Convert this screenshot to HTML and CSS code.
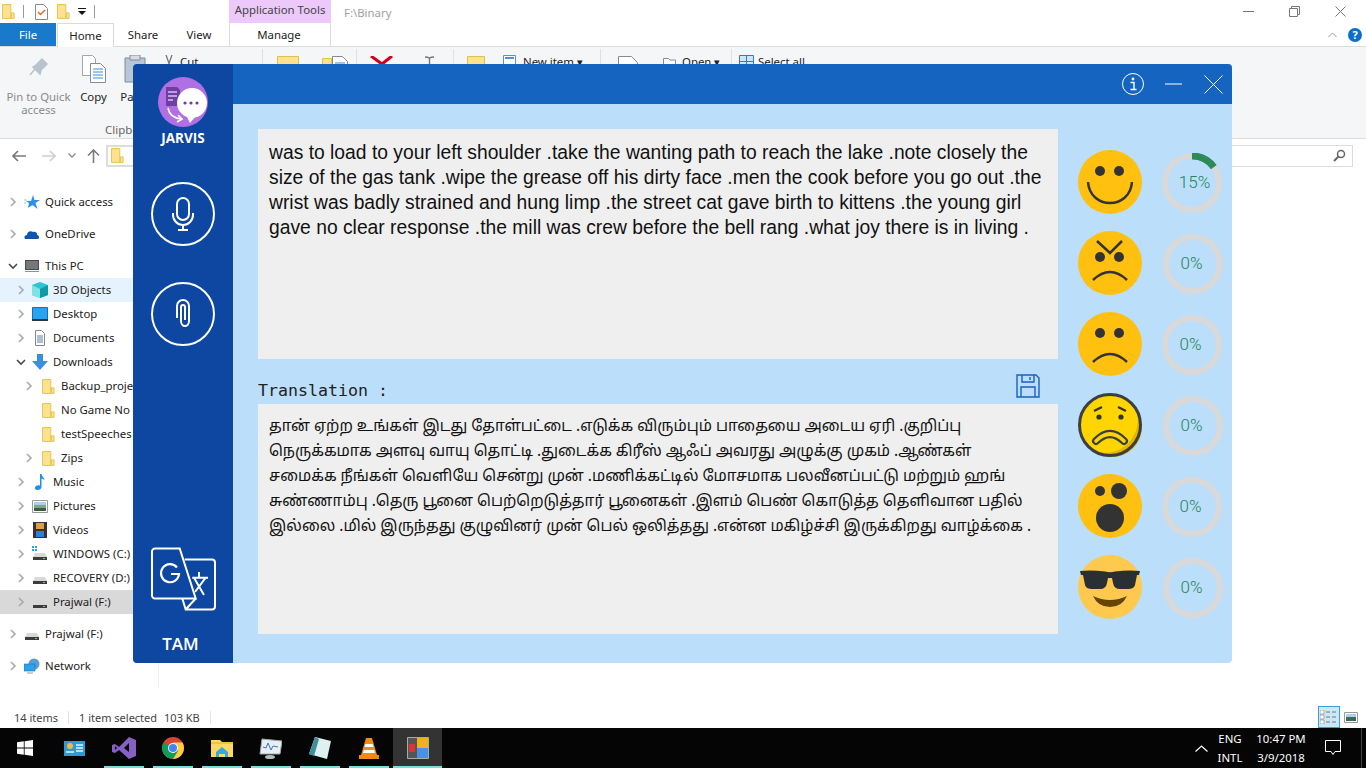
FILE: index.html
```html
<!DOCTYPE html>
<html lang="en">
<head>
    <meta charset="UTF-8">
    <meta name="viewport" content="width=device-width, initial-scale=1.0">
    <title>JARVIS</title>
    <link rel="stylesheet" href="styles.css">
</head>
<body>
    <svg class="defs" width="0" height="0">
        <symbol id="folder" viewBox="0 0 14 16">
            <path d="M.5.5h9v15h-9z" fill="#ffe28e" stroke="#e3c04d"/>
            <path d="M10 9.5h3v6h-3z" fill="#ffe28e" stroke="#e3c04d"/>
        </symbol>
        <symbol id="right" viewBox="0 0 8 10"><path d="M2 1l4 4-4 4" fill="none" stroke="#a9a9a9" stroke-width="1.6"/></symbol>
        <symbol id="down" viewBox="0 0 10 8"><path d="M1 2l4 4 4-4" fill="none" stroke="#4a4a4a" stroke-width="1.6"/></symbol>
        <symbol id="drive" viewBox="0 0 16 16">
            <path d="M3 7h10l2 4H1z" fill="#d8d8d8"/><path d="M1 11h14v3H1z" fill="#3c3c3c"/><path d="M11 12h2v1h-2z" fill="#5fd35f"/>
        </symbol>
    </svg>

    <div class="explorer">
        <header class="qat">
            <div class="qat-icons">
                <svg class="ic-folder-s" width="13" height="15"><use href="#folder"/></svg>
                <span class="qat-sep"></span>
                <svg width="13" height="16" viewBox="0 0 13 16"><path d="M.5.5h8l4 4v11H.5z" fill="#fff" stroke="#8a8a8a"/><path d="M3 8l2.500 2.500L10 6" fill="none" stroke="#e8622a" stroke-width="1.500"/></svg>
                <svg class="ic-folder-s" width="13" height="15"><use href="#folder"/></svg>
                <svg width="8" height="7" viewBox="0 0 8 7"><path d="M0 0h8v1H0zM0 3h8L4 7z" fill="#111"/></svg>
                <span class="qat-sep"></span>
            </div>
            <div class="app-tools">Application Tools</div>
            <div class="path-title">F:\Binary</div>
            <div class="win-ctrl">
                <svg width="11" height="11" viewBox="0 0 11 11"><path d="M0 5.500h11" stroke="#777"/></svg>
                <svg width="11" height="11" viewBox="0 0 11 11"><path d="M2.500 2.500V.5h8v8h-2M.5 2.500h8v8h-8z" fill="none" stroke="#777"/></svg>
                <svg width="11" height="11" viewBox="0 0 11 11"><path d="M.5.5l10 10M10.500.5l-10 10" stroke="#777"/></svg>
            </div>
        </header>

        <nav class="tabs">
            <span class="tab tab-file">File</span>
            <span class="tab tab-home">Home</span>
            <span class="tab tab-share">Share</span>
            <span class="tab tab-view">View</span>
            <span class="tab tab-manage">Manage</span>
            <span class="tabs-right">
                <svg width="9" height="6" viewBox="0 0 9 6"><path d="M.5 5l4-4 4 4" fill="none" stroke="#999"/></svg>
                <svg width="14" height="14" viewBox="0 0 14 14"><circle cx="7" cy="7" r="7" fill="#0f6fc6"/><text x="7" y="11" class="help-q">?</text></svg>
            </span>
        </nav>

        <section class="ribbon">
            <div class="tool tool-col">
                <svg width="24" height="24" viewBox="0 0 24 24"><path d="M9 10l6-6 5 5-6 6-1 4-7-7zM8 14l-5 6" fill="#b9c2cf" stroke="#b9c2cf" stroke-width="1.500"/></svg>
                <span class="muted">Pin to Quick access</span>
            </div>
            <div class="tool tool-col">
                <svg class="ic-copy" width="24" height="28" viewBox="0 0 24 28"><path d="M.5.5h10l3 3v17H.5z" fill="#fff" stroke="#9aa"/><path d="M8.500 8.500h10l5 5v14h-15z" fill="#fff" stroke="#889"/><path d="M11 14h10M11 17h10M11 20h10M11 23h10" stroke="#3b8be0"/></svg>
                <span>Copy</span>
            </div>
            <div class="tool tool-col">
                <svg class="ic-copy" width="22" height="28" viewBox="0 0 22 28"><path d="M1 3h20v24H1z" fill="#b9c6d6" stroke="#7f8c99"/><path d="M6 0h10v5H6z" fill="#d8dde3" stroke="#7f8c99"/></svg>
                <span>Paste</span>
            </div>
            <div class="tool tool-cut">
                <svg width="8" height="11" viewBox="0 0 8 11"><path d="M1 0l4 11M7 0L3 11" stroke="#777" stroke-width="1.300"/></svg>
                <span>Cut</span>
            </div>
            <span class="rb-sep"></span>
            <svg class="rb-ic" width="22" height="16" viewBox="0 0 22 16"><path d="M.5.5h21v15H.5z" fill="#ffe28e" stroke="#e3c04d"/></svg>
            <svg class="rb-ic" width="26" height="16" viewBox="0 0 26 16"><path d="M.5 2.500h9v13h-9z" fill="#ffe28e" stroke="#e3c04d"/><path d="M10.500.5h10l5 5v10h-15z" fill="#fff" stroke="#889"/><path d="M13 7h10M13 10h10" stroke="#3b8be0"/></svg>
            <span class="rb-sep"></span>
            <svg class="rb-ic rb-x" width="25" height="10" viewBox="0 0 25 10"><path d="M2 0l11 8L23 0" fill="none" stroke="#d5001c" stroke-width="3"/></svg>
            <svg class="rb-ic rb-i" width="9" height="10" viewBox="0 0 9 10"><path d="M0 1c2 0 3 0 4.500 1C6 1 7 1 9 1M4.500 2v8" fill="none" stroke="#777" stroke-width="1.400"/></svg>
            <span class="rb-sep"></span>
            <svg class="rb-ic" width="18" height="14" viewBox="0 0 18 14"><path d="M.5.5h17v13H.5z" fill="#ffe28e" stroke="#e3c04d"/></svg>
            <div class="tool tool-cut tool-pad">
                <svg width="13" height="11" viewBox="0 0 13 11"><path d="M.5.5h12v10H.5z" fill="#fff" stroke="#5a8fc9"/><path d="M2 3h9" stroke="#5a8fc9" stroke-width="2"/></svg>
                <span>New item ▾</span>
            </div>
            <span class="rb-sep"></span>
            <svg class="rb-ic" width="20" height="10" viewBox="0 0 20 10"><path d="M.5 10V.5h13l6 6V10" fill="#fff" stroke="#889"/></svg>
            <div class="tool tool-cut tool-pad-open">
                <svg width="13" height="11" viewBox="0 0 13 11"><path d="M.5 11V3.500h5l1.500 1.500h5.500v6" fill="#fff" stroke="#889"/></svg>
                <span>Open ▾</span>
            </div>
            <span class="rb-sep"></span>
            <div class="tool tool-cut tool-pad-sel">
                <svg width="15" height="13" viewBox="0 0 15 13"><path d="M.5.5h14v12H.5zM.5 6.500h14M7.500.5v12" fill="#cfe6fb" stroke="#2b7cd3"/></svg>
                <span>Select all</span>
            </div>
            <div class="rb-label">Clipboard</div>
        </section>

        <section class="addressbar">
            <svg width="14" height="14" viewBox="0 0 14 14"><path d="M6 2L1 7l5 5M1 7h13" fill="none" stroke="#7a7a7a" stroke-width="1.600"/></svg>
            <svg class="nav-fwd" width="14" height="14" viewBox="0 0 14 14"><path d="M8 2l5 5-5 5M13 7H0" fill="none" stroke="#d0d0d0" stroke-width="1.600"/></svg>
            <svg class="nav-drop" width="8" height="5" viewBox="0 0 8 5"><path d="M.5.5L4 4 7.500.5" fill="none" stroke="#8a8a8a" stroke-width="1.300"/></svg>
            <svg class="nav-up" width="13" height="14" viewBox="0 0 13 14"><path d="M1 6.500l5.500-5.500L12 6.500M6.500 1v13" fill="none" stroke="#7a7a7a" stroke-width="1.600"/></svg>
            <div class="addr-box"><svg width="13" height="15"><use href="#folder"/></svg></div>
            <div class="search-box">
                <svg width="13" height="13" viewBox="0 0 13 13"><circle cx="8" cy="5" r="3.500" fill="none" stroke="#666" stroke-width="1.500"/><path d="M5.500 7.500L1 12" stroke="#666" stroke-width="2"/></svg>
            </div>
        </section>

        <section class="main">
            <aside class="tree">
                <div class="group">
                    <div class="row lv0"><svg class="chev" width="8" height="10"><use href="#right"/></svg>
                        <svg class="ico" width="16" height="16" viewBox="0 0 16 16"><path d="M9 1l1.500 5H16l-4.500 3 2 6L8.500 11 4 14l1-5-3-2h5z" fill="#2e8fe6"/><path d="M0 6h3M0 9h2" stroke="#8ec6f5"/></svg>
                        <span>Quick access</span></div>
                </div>
                <div class="group">
                    <div class="row lv0"><svg class="chev" width="8" height="10"><use href="#right"/></svg>
                        <svg class="ico" width="16" height="16" viewBox="0 0 16 16"><path d="M1 13c-1.500-2 0-4 2-4 0-3 3-5 6-3 2-1 5 1 4 3 2 0 3 3 1 4z" fill="#0f55b0"/></svg>
                        <span>OneDrive</span></div>
                </div>
                <div class="group">
                    <div class="row lv0"><svg class="chev" width="10" height="8"><use href="#down"/></svg>
                        <svg class="ico" width="16" height="16" viewBox="0 0 16 16"><path d="M1 2h14v10H1z" fill="#4a4a4a"/><path d="M2 3h12v8H2z" fill="#777"/><path d="M1 13h14v1H1z" fill="#4aa8e8"/></svg>
                        <span>This PC</span></div>
                    <div class="row lv1 row-hover"><svg class="chev" width="8" height="10"><use href="#right"/></svg>
                        <svg class="ico" width="16" height="16" viewBox="0 0 16 16"><path d="M8 0l8 3v10l-8 3-8-3V3z" fill="#2fc4cf"/><path d="M8 7l8-4v10l-8 3z" fill="#0e9aa8"/><path d="M0 3l8 4v9l-8-3z" fill="#7fe3e3"/></svg>
                        <span>3D Objects</span></div>
                    <div class="row lv1"><svg class="chev" width="8" height="10"><use href="#right"/></svg>
                        <svg class="ico" width="16" height="14" viewBox="0 0 16 14"><path d="M.5.5h15v12H.5z" fill="#25a5f0" stroke="#0f6fc6"/><path d="M0 12h16v2H0z" fill="#333"/></svg>
                        <span>Desktop</span></div>
                    <div class="row lv1"><svg class="chev" width="8" height="10"><use href="#right"/></svg>
                        <svg class="ico" width="16" height="16" viewBox="0 0 16 16"><path d="M3.500.5h6l3 3v12h-9z" fill="#fff" stroke="#888"/><path d="M5 6h6M5 8h6M5 10h6M5 12h6" stroke="#5a7fa8"/></svg>
                        <span>Documents</span></div>
                    <div class="row lv1"><svg class="chev" width="10" height="8"><use href="#down"/></svg>
                        <svg class="ico ico-dl" width="16" height="16" viewBox="0 0 16 16"><path d="M5 0h6v7h5l-8 9-8-9h5z" fill="#3a8fe0"/></svg>
                        <span>Downloads</span></div>
                    <div class="row lv2"><svg class="chev" width="8" height="10"><use href="#right"/></svg>
                        <svg class="ico-s" width="13" height="15"><use href="#folder"/></svg>
                        <span>Backup_project</span></div>
                    <div class="row lv2 no-chev"><svg class="ico-s" width="13" height="15"><use href="#folder"/></svg>
                        <span>No Game No Life</span></div>
                    <div class="row lv2 no-chev"><svg class="ico-s" width="13" height="15"><use href="#folder"/></svg>
                        <span>testSpeeches</span></div>
                    <div class="row lv2"><svg class="chev" width="8" height="10"><use href="#right"/></svg>
                        <svg class="ico-s" width="13" height="15"><use href="#folder"/></svg>
                        <span>Zips</span></div>
                    <div class="row lv1"><svg class="chev" width="8" height="10"><use href="#right"/></svg>
                        <svg class="ico" width="16" height="16" viewBox="0 0 16 16"><path d="M8 0h1.500c.5 3 3 3.500 3 6-1-1-2-1.500-3-1.500V13c0 2-2 3-4 3s-3-1-2.500-2.500S6 11 8 11.500z" fill="#1e90e8"/></svg>
                        <span>Music</span></div>
                    <div class="row lv1"><svg class="chev" width="8" height="10"><use href="#right"/></svg>
                        <svg class="ico" width="16" height="13" viewBox="0 0 16 13"><path d="M.5.5h15v12H.5z" fill="#fff" stroke="#999"/><path d="M2 2h12v3H2z" fill="#a9d2ea"/><path d="M2 5h12v3H2z" fill="#7fa58a"/><path d="M2 8h12v3H2z" fill="#3d5a46"/></svg>
                        <span>Pictures</span></div>
                    <div class="row lv1"><svg class="chev" width="8" height="10"><use href="#right"/></svg>
                        <svg class="ico" width="14" height="16" viewBox="0 0 14 16"><path d="M0 0h14v16H0z" fill="#333"/><path d="M3 1h8v6H3z" fill="#d9a52e"/><path d="M3 9h8v6H3z" fill="#2f7fd6"/></svg>
                        <span>Videos</span></div>
                    <div class="row lv1"><svg class="chev" width="8" height="10"><use href="#right"/></svg>
                        <svg class="ico" width="16" height="16" viewBox="0 0 16 16"><path d="M0 0h2v2H0zM3 0h2v2H3zM0 3h2v2H0zM3 3h2v2H3z" fill="#1fa4ee"/><use href="#drive"/></svg>
                        <span>WINDOWS (C:)</span></div>
                    <div class="row lv1"><svg class="chev" width="8" height="10"><use href="#right"/></svg>
                        <svg class="ico" width="16" height="16"><use href="#drive"/></svg>
                        <span>RECOVERY (D:)</span></div>
                    <div class="row lv1 row-selected"><svg class="chev" width="8" height="10"><use href="#right"/></svg>
                        <svg class="ico" width="16" height="16"><use href="#drive"/></svg>
                        <span>Prajwal (F:)</span></div>
                </div>
                <div class="group">
                    <div class="row lv0"><svg class="chev" width="8" height="10"><use href="#right"/></svg>
                        <svg class="ico" width="16" height="16"><use href="#drive"/></svg>
                        <span>Prajwal (F:)</span></div>
                </div>
                <div class="group">
                    <div class="row lv0"><svg class="chev" width="8" height="10"><use href="#right"/></svg>
                        <svg class="ico" width="16" height="16" viewBox="0 0 16 16"><circle cx="10" cy="6" r="5.500" fill="#5c9bd5"/><path d="M0 6h11v7H0z" fill="#29a3ec" stroke="#1c70b8" stroke-width=".6"/><path d="M3 15h6" stroke="#999"/></svg>
                        <span>Network</span></div>
                </div>
            </aside>
        </section>

        <footer class="status">
            <span>14 items</span>
            <span class="status-sep"></span>
            <span>1 item selected</span>
            <span class="status-size">103 KB</span>
            <span class="status-sep"></span>
            <span class="status-views">
                <span class="view-on">
                    <svg width="18" height="14" viewBox="0 0 18 14"><path d="M0 0h4v4H0zM0 5h4v4H0zM0 10h4v4H0z" fill="#fff" stroke="#999" stroke-width=".8"/><path d="M6 2h4M12 2h4M6 7h4M12 7h4M6 12h4M12 12h4" stroke="#777"/></svg>
                </span>
                <svg width="14" height="11" viewBox="0 0 14 11"><path d="M.5.5h13v10H.5z" fill="#fff" stroke="#999"/><path d="M2 2h10v3H2z" fill="#a9d2ea"/><path d="M2 5h10v4H2z" fill="#3d6a56"/></svg>
            </span>
        </footer>
    </div>

    <footer class="taskbar">
        <div class="task task-start">
            <svg width="16" height="16" viewBox="0 0 16 16"><path d="M0 2.300L6.800 1.300V7.600H0zM7.600 1.200L16 0V7.600H7.600zM0 8.400H6.800V14.700L0 13.700zM7.600 8.400H16V16L7.600 14.800z" fill="#fff"/></svg>
        </div>
        <div class="task">
            <svg width="21" height="15" viewBox="0 0 21 15"><path d="M0 0h21v15H0z" fill="#2f9ad8"/><circle cx="6" cy="5" r="3" fill="#ffb73a"/><path d="M2 11h8M12 4h7M12 7h7M12 10h7" stroke="#e8f4fb" stroke-width="1.500"/></svg>
        </div>
        <div class="task task-on">
            <svg width="24" height="24" viewBox="0 0 24 24"><path d="M17 1l7 3v16l-7 3-10-9-4 3-3-1V9l3-1 4 3zM17 7l-5 5 5 4zM3 10v4l2-2z" fill="#8661c5"/></svg>
        </div>
        <div class="task task-on">
            <svg width="22" height="22" viewBox="0 0 22 22"><circle cx="11" cy="11" r="11" fill="#db4437"/><path d="M11 11L1.500 5.500A11 11 0 0 0 11 22l5-8z" fill="#0f9d58"/><path d="M11 5.500h9.500A11 11 0 0 1 11 22l5-8z" fill="#ffcd40"/><circle cx="11" cy="11" r="5" fill="#fff"/><circle cx="11" cy="11" r="4" fill="#4285f4"/></svg>
        </div>
        <div class="task task-on">
            <svg width="22" height="18" viewBox="0 0 22 18"><path d="M0 1h9l2 2h11v15H0z" fill="#ffd766"/><path d="M0 3h22v2H0z" fill="#f3c140"/><path d="M5 13l6-5 6 5v5h-3v-3H8v3H5z" fill="#35a8e0"/></svg>
        </div>
        <div class="task task-on">
            <svg width="23" height="22" viewBox="0 0 23 22"><path d="M3 2l20 2-2 13H1z" fill="#e8eef2" stroke="#9aa"/><path d="M4 10l3 1 2-5 3 7 2-4 5 1" fill="none" stroke="#3a78b8"/><ellipse cx="11" cy="20" rx="5" ry="2" fill="#bbb"/></svg>
        </div>
        <div class="task task-on">
            <svg width="22" height="22" viewBox="0 0 22 22"><path d="M6 0l16 4-4 18L0 17z" fill="#dff0f0"/><path d="M6 0L0 17l5 2L10 2z" fill="#3f8f9f"/></svg>
        </div>
        <div class="task task-on">
            <svg width="20" height="23" viewBox="0 0 20 23"><path d="M7 1h6l5 17H2z" fill="#f28a12"/><path d="M6.400 7h7.200l1 3H5.400zM4.800 13h10.400l.8 3H4z" fill="#fff"/><path d="M0 18h20v4H0z" fill="#f28a12"/></svg>
        </div>
        <div class="task task-on task-active">
            <svg width="22" height="22" viewBox="0 0 22 22"><path d="M.5.5h21v21H.5z" fill="#555" stroke="#aaa"/><path d="M10 1h11v10H10z" fill="#f2b01e"/><path d="M10 11h11v10H10z" fill="#4d8fe0"/><path d="M2 7h6v8H2z" fill="#d33"/></svg>
        </div>
        <div class="tray">
            <svg width="13" height="7" viewBox="0 0 13 7"><path d="M.5 6.500l6-5.500 6 5.500" fill="none" stroke="#fff" stroke-width="1.200"/></svg>
            <div class="tray-lang"><span>ENG</span><span>INTL</span></div>
            <div class="tray-clock"><span>10:47 PM</span><span>3/9/2018</span></div>
            <svg class="tray-note" width="16" height="16" viewBox="0 0 16 16"><path d="M.5.5h15v11H10l-2 3-2-3H.5z" fill="none" stroke="#fff"/></svg>
            <span class="show-desktop"></span>
        </div>
    </footer>

    <main class="jarvis">
        <aside class="side">
            <svg class="logo" width="50" height="50" viewBox="0 0 50 50">
                <circle cx="25" cy="25" r="25" fill="#b06fe3"/>
                <path d="M8 10h11l3 3v16H8z" fill="#6d3fa3"/>
                <path d="M10 15h9M10 19h9M10 23h5" stroke="#d9c2f0" stroke-width="1.500"/>
                <path d="M10 31c1 6 6 10 13 11" fill="none" stroke="#fff" stroke-width="1.600"/>
                <path d="M20 38l4 4-5 3" fill="none" stroke="#fff" stroke-width="1.600"/>
                <circle cx="34" cy="26" r="15" fill="#fff"/>
                <path d="M28 38l4 8 6-7z" fill="#fff"/>
                <circle cx="27" cy="26" r="1.600" fill="#6d3fa3"/>
                <circle cx="33" cy="26" r="1.600" fill="#6d3fa3"/>
                <circle cx="39" cy="26" r="1.600" fill="#6d3fa3"/>
            </svg>
            <div class="brand">JARVIS</div>
            <button class="round-btn round-mic">
                <svg width="64" height="64" viewBox="0 0 64 64" fill="none" stroke="#fff" stroke-width="2">
                    <circle cx="32" cy="32" r="31"/>
                    <rect x="26" y="16" width="12" height="22" rx="6"/>
                    <path d="M22 31v2a10 10 0 0 0 20 0v-2M32 43v5M27 48h10"/>
                </svg>
            </button>
            <button class="round-btn round-clip">
                <svg width="64" height="64" viewBox="0 0 64 64" fill="none" stroke="#fff" stroke-width="2">
                    <circle cx="32" cy="32" r="31"/>
                    <path d="M26 36V24a6 6 0 0 1 12 0V39a4 5 0 0 1-8 0V25a2 2 0 0 1 4 0V38"/>
                </svg>
            </button>
            <svg class="translate" width="65" height="64" viewBox="0 0 65 64" fill="none" stroke="#fff" stroke-width="2">
                <path d="M4 1.500H28.700L44.700 51.500H4a3 3 0 0 1-3-3V4.500a3 3 0 0 1 3-3z"/>
                <path d="M33.700 12.500H61a3 3 0 0 1 3 3V59.500a3 3 0 0 1-3 3H34.700L31.300 51.500M44.700 51.500L34.700 62.500"/>
                <path d="M26 20.500a9 9 0 1 0 2 6.500H20" stroke-width="2.200"/>
                <path d="M41.300 30.700H57M48 25v5.700M43 30.700L53 48M54.700 30.700L44 45"/>
            </svg>
            <div class="lang">TAM</div>
        </aside>

        <section class="panel">
            <header class="panel-top">
                <svg width="22" height="22" viewBox="0 0 22 22"><circle cx="11" cy="11" r="10.500" fill="none" stroke="#fff"/><circle cx="11" cy="6" r="1.400" fill="#fff"/><path d="M8.500 9.500h3.500v7M8.500 16.500h6" fill="none" stroke="#fff" stroke-width="1.400"/></svg>
                <svg class="top-min" width="17" height="2" viewBox="0 0 17 2"><path d="M0 1h17" stroke="#fff" stroke-width="1.200"/></svg>
                <svg class="top-close" width="19" height="19" viewBox="0 0 19 19"><path d="M.5.5l18 18M18.500.5l-18 18" stroke="#fff"/></svg>
            </header>
            <div class="panel-body">
                <div class="texts">
                    <div class="box box-en">
                        was to load to your left shoulder .take the wanting path to reach the lake .note closely the<br>
                        size of the gas tank .wipe the grease off his dirty face .men the cook before you go out .the<br>
                        wrist was badly strained and hung limp .the street cat gave birth to kittens .the young girl<br>
                        gave no clear response .the mill was crew before the bell rang .what joy there is in living .
                    </div>
                    <div class="trans-head">
                        <span class="trans-label">Translation :</span>
                        <svg class="save" width="24" height="24" viewBox="0 0 24 24" fill="none" stroke="#1a5fc4" stroke-width="1.400"><path d="M1 1h19l3 3v19H1zM6 1v7h12V1M5 23v-10h14v10M14 3v3"/></svg>
                    </div>
                    <div class="box box-ta" lang="ta">
                        தான் ஏற்ற உங்கள் இடது தோள்பட்டை .எடுக்க விரும்பும் பாதையை அடைய ஏரி .குறிப்பு<br>
                        நெருக்கமாக அளவு வாயு தொட்டி .துடைக்க கிரீஸ் ஆஃப் அவரது அழுக்கு முகம் .ஆண்கள்<br>
                        சமைக்க நீங்கள் வெளியே சென்று முன் .மணிக்கட்டில் மோசமாக பலவீனப்பட்டு மற்றும் ஹங்<br>
                        சுண்ணாம்பு .தெரு பூனை பெற்றெடுத்தார் பூனைகள் .இளம் பெண் கொடுத்த தெளிவான பதில்<br>
                        இல்லை .மில் இருந்தது குழுவினர் முன் பெல் ஒலித்தது .என்ன மகிழ்ச்சி இருக்கிறது வாழ்க்கை .
                    </div>
                </div>
                <div class="moods">
                    <div class="mood">
                        <svg width="64" height="64" viewBox="0 0 64 64" fill="none" stroke="#333" stroke-width="2.500">
                            <circle cx="32" cy="32" r="32" fill="#ffc010" stroke="none"/>
                            <circle cx="22" cy="21" r="5" fill="#333" stroke="none"/>
                            <circle cx="41" cy="21" r="5" fill="#333" stroke="none"/>
                            <path d="M10 32C12 60 52 60 54 32"/>
                        </svg>
                        <div class="ring ring-on">
                            <svg width="60" height="60" viewBox="0 0 60 60" fill="none">
                                <circle cx="30" cy="30" r="27" stroke="#d9d9d9" stroke-width="6"/>
                                <circle cx="30" cy="30" r="27" stroke="#2e8b57" stroke-width="7" pathLength="100" stroke-dasharray="15 85" transform="rotate(-90 30 30)"/>
                            </svg>
                            <span>15%</span>
                        </div>
                    </div>
                    <div class="mood">
                        <svg width="64" height="64" viewBox="0 0 64 64" fill="none" stroke="#333" stroke-width="2.500">
                            <circle cx="32" cy="32" r="32" fill="#ffc010" stroke="none"/>
                            <circle cx="22" cy="26" r="5" fill="#333" stroke="none"/>
                            <circle cx="41" cy="26" r="5" fill="#333" stroke="none"/>
                            <path d="M19 10L32 22 44 10M15 49Q32 33 49 49"/>
                        </svg>
                        <div class="ring"><svg width="60" height="60" viewBox="0 0 60 60" fill="none"><circle cx="30" cy="30" r="27" stroke="#d9d9d9" stroke-width="6"/></svg><span>0%</span></div>
                    </div>
                    <div class="mood">
                        <svg width="64" height="64" viewBox="0 0 64 64" fill="none" stroke="#333" stroke-width="2.500">
                            <circle cx="32" cy="32" r="32" fill="#ffc010" stroke="none"/>
                            <circle cx="22" cy="21" r="5" fill="#333" stroke="none"/>
                            <circle cx="41" cy="21" r="5" fill="#333" stroke="none"/>
                            <path d="M15 50Q32 34 49 50"/>
                        </svg>
                        <div class="ring"><svg width="60" height="60" viewBox="0 0 60 60" fill="none"><circle cx="30" cy="30" r="27" stroke="#d9d9d9" stroke-width="6"/></svg><span>0%</span></div>
                    </div>
                    <div class="mood">
                        <svg width="64" height="64" viewBox="0 0 64 64" fill="none">
                            <circle cx="32" cy="32" r="31" fill="#ffd500"/>
                            <path d="M58 16A30 30 0 0 1 16 58 33 33 0 0 0 58 16z" fill="#e3b400"/>
                            <circle cx="32" cy="32" r="30.500" stroke="#3a3f44" stroke-width="3"/>
                            <circle cx="21" cy="24" r="2.600" fill="#333"/>
                            <circle cx="43" cy="24" r="2.600" fill="#333"/>
                            <path d="M16 18l8-4M40 14l8 4" stroke="#333" stroke-width="2.200"/>
                            <path d="M18 48Q32 34 46 48" stroke="#3a3f44" stroke-width="8" stroke-linecap="round"/>
                            <path d="M18 48Q32 34 46 48" stroke="#ffd500" stroke-width="3.600" stroke-linecap="round"/>
                        </svg>
                        <div class="ring"><svg width="60" height="60" viewBox="0 0 60 60" fill="none"><circle cx="30" cy="30" r="27" stroke="#d9d9d9" stroke-width="6"/></svg><span>0%</span></div>
                    </div>
                    <div class="mood">
                        <svg width="64" height="64" viewBox="0 0 64 64">
                            <circle cx="32" cy="32" r="32" fill="#ffc010"/>
                            <circle cx="22" cy="17" r="5" fill="#333"/>
                            <circle cx="41" cy="17" r="8" fill="#333"/>
                            <circle cx="32" cy="44" r="14" fill="#333"/>
                        </svg>
                        <div class="ring"><svg width="60" height="60" viewBox="0 0 60 60" fill="none"><circle cx="30" cy="30" r="27" stroke="#d9d9d9" stroke-width="6"/></svg><span>0%</span></div>
                    </div>
                    <div class="mood">
                        <svg width="64" height="64" viewBox="0 0 64 64">
                            <circle cx="32" cy="32" r="32" fill="#ffc94d"/>
                            <path d="M2 16Q14 15 27 16.500Q32 18 37 16.500Q50 15 62 16L61 20 59 20 57 30Q56 34 50 34H42Q36 34 35 28L34 23H30L29 28Q28 34 22 34H14Q8 34 7 30L5 20 3 20z" fill="#292f33"/>
                            <path d="M15 41Q32 49 49 41Q44 52 32 52Q20 52 15 41z" fill="#664500"/>
                        </svg>
                        <div class="ring"><svg width="60" height="60" viewBox="0 0 60 60" fill="none"><circle cx="30" cy="30" r="27" stroke="#d9d9d9" stroke-width="6"/></svg><span>0%</span></div>
                    </div>
                </div>
            </div>
        </section>
    </main>
</body>
</html>
```

FILE: styles.css
```css
* {
    box-sizing: border-box;
}
body {
    margin: 0;
    width: 1366px;
    height: 768px;
    overflow: hidden;
    background-color: white;
    font-family: "Noto Sans", "Open Sans", sans-serif;
    font-size: 11.4px;
    color: #222;
    position: relative;
}
svg {
    display: block;
    flex-shrink: 0;
}
.defs {
    position: absolute;
}

/* explorer behind the app */
.explorer {
    height: 728px;
    display: flex;
    flex-direction: column;
}
.qat {
    height: 23px;
    display: flex;
    align-items: center;
}
.qat-icons {
    width: 229px;
    display: flex;
    align-items: center;
    padding-left: 2px;
    gap: 8px;
}
.qat-sep {
    width: 1px;
    height: 13px;
    background-color: #9a9a9a;
}
.qat-icons .qat-sep:nth-child(2) {
    margin-right: 3px;
}
.qat-icons svg:nth-child(3) {
    margin-right: 1px;
}
.app-tools {
    width: 102px;
    height: 23px;
    line-height: 20px;
    text-align: center;
    background-color: #ecc8fb;
    color: #444;
}
.path-title {
    margin-left: 13px;
    margin-top: 2px;
    color: #a0a0a0;
}
.win-ctrl {
    margin-left: auto;
    display: flex;
    gap: 35px;
    padding-right: 20px;
    align-items: center;
}
.tabs {
    height: 24px;
    display: flex;
    border-bottom: 1px solid #dadbdc;
    position: relative;
}
.tab {
    height: 23px;
    line-height: 24px;
    text-align: center;
}
.tab-file {
    width: 56px;
    background-color: #1979ca;
    color: white;
}
.tab-home {
    width: 57px;
    height: 24px;
    margin-left: 1px;
    border: 1px solid #dadbdc;
    border-bottom: none;
    background-color: white;
    z-index: 1;
}
.tab-share {
    width: 58px;
}
.tab-view {
    width: 54px;
}
.tab-manage {
    width: 102px;
    margin-left: 3px;
    padding-right: 2px;
    border: 1px solid #dadbdc;
    border-width: 0 1px;
}
.tabs-right {
    margin-left: auto;
    padding-right: 4px;
    display: flex;
    align-items: center;
    gap: 11px;
}
.help-q {
    font-size: 11px;
    font-weight: bold;
    fill: white;
    text-anchor: middle;
}
.ribbon {
    height: 92px;
    background-color: #f5f6f7;
    border-bottom: 1px solid #dadbdc;
    padding-top: 8px;
    display: grid;
    grid-template-columns: 77px 33px 50px 102px 1px 50px 43px 1px 48px 48px 1px 43px 103px 1px 54px 76px 1px 1fr;
    grid-template-rows: 68px 14px;
}
.tool {
    line-height: 13px;
}
.tool-col {
    display: flex;
    flex-direction: column;
    align-items: center;
    gap: 11px;
    text-align: center;
    line-height: 13px;
}
.tool-col .ic-copy {
    margin-bottom: -4px;
}
.muted {
    color: #8a8a8a;
}
.tool-cut {
    display: flex;
    align-items: flex-start;
    gap: 7px;
    padding-left: 5px;
}
.tool-pad {
    padding-left: 6px;
}
.tool-pad-open {
    padding-left: 8px;
    gap: 6px;
}
.tool-pad-sel {
    padding-left: 7px;
    gap: 4px;
}
.rb-sep {
    background-color: #e0e0e0;
    height: 80px;
    margin-top: -6px;
}
.rb-ic {
    justify-self: center;
    margin-top: 1px;
}
.rb-label {
    grid-column: 1 / 5;
    grid-row: 2;
    text-align: center;
    color: #666;
    line-height: 14px;
}
.addressbar {
    height: 33px;
    display: flex;
    align-items: center;
    padding: 0 13px 0 12px;
}
.nav-fwd {
    margin-left: 16px;
}
.nav-drop {
    margin-left: 12px;
}
.nav-up {
    margin-left: 11px;
}
.addr-box {
    width: 900px;
    height: 22px;
    margin-left: 6px;
    border: 2px solid #dcdcdc;
    display: flex;
    align-items: center;
    padding-left: 3px;
}
.search-box {
    flex: 1;
    height: 22px;
    margin-left: 8px;
    border: 1px solid #dcdcdc;
    display: flex;
    align-items: center;
    justify-content: flex-end;
    padding-right: 6px;
}
.main {
    flex: 1;
    padding-top: 18px;
}
.tree {
    width: 159px;
    height: 100%;
    border-right: 1px solid #eeeeee;
    margin-top: -18px;
    padding-top: 18px;
}
.group {
    margin-bottom: 8px;
}
.row {
    height: 24px;
    display: flex;
    align-items: center;
    white-space: nowrap;
    overflow: hidden;
}
.row span {
    margin-top: -2px;
}
.row-hover {
    background-color: #e5f3ff;
}
.row-selected {
    background-color: #d9d9d9;
}
.lv0 {
    padding-left: 8px;
}
.lv1 {
    padding-left: 16px;
}
.lv2 {
    padding-left: 24px;
}
.no-chev {
    padding-left: 42px;
}
.chev {
    width: 10px;
}
.ico {
    margin: 0 5px 0 6px;
    width: 16px;
}
.ico-s {
    margin: 0 6px 0 8px;
}
.no-chev .ico-s {
    margin-left: 0;
}
.status {
    height: 22px;
    display: flex;
    align-items: center;
    padding-left: 14px;
    font-size: 11px;
    color: #444;
}
.status-sep {
    width: 1px;
    height: 13px;
    background-color: #e4e4e4;
    margin: 0 10px;
}
.status-size {
    margin-left: 7px;
}
.status-views {
    margin-left: auto;
    padding-right: 8px;
    display: flex;
    align-items: center;
    gap: 4px;
}
.view-on {
    width: 22px;
    height: 22px;
    border: 1px solid #3b9dd3;
    background-color: #cbe8f6;
    display: flex;
    align-items: center;
    justify-content: center;
}

/* taskbar */
.taskbar {
    height: 40px;
    background-color: #050505;
    display: flex;
    color: white;
}
.task {
    width: 49px;
    display: flex;
    align-items: center;
    justify-content: center;
    position: relative;
}
.task-start {
    width: 50px;
}
.task-on::after {
    content: "";
    position: absolute;
    left: 5px;
    right: 4px;
    bottom: 0;
    height: 2px;
    background-color: #76dede;
}
.task-active {
    background-color: #333333;
}
.task-active::after {
    left: 0;
    right: 0;
}
.tray {
    margin-left: auto;
    display: flex;
    align-items: center;
}
.tray-lang, .tray-clock {
    display: flex;
    flex-direction: column;
    text-align: center;
    line-height: 19px;
}
.tray-lang {
    width: 38px;
    margin-left: 3px;
}
.tray-clock {
    width: 64px;
}
.tray-note {
    margin-left: 12px;
}
.show-desktop {
    width: 1px;
    height: 40px;
    background-color: #444;
    margin-left: 20px;
    margin-right: 4px;
}

/* the app window on top */
.jarvis {
    position: absolute;
    left: 133px;
    top: 64px;
    width: 1099px;
    height: 599px;
    display: flex;
    border-radius: 4px;
    overflow: hidden;
    background-color: #bbdefb;
}
.side {
    width: 100px;
    background-color: #0d47a1;
    display: flex;
    flex-direction: column;
    align-items: center;
    color: white;
    padding-top: 13px;
}
.brand {
    font-family: "Open Sans", sans-serif;
    font-weight: 700;
    font-size: 13.5px;
    line-height: 16px;
    margin-top: 3px;
}
.round-btn {
    width: 64px;
    height: 64px;
    padding: 0;
    border: none;
    background: none;
}
.round-mic {
    margin-top: 36px;
}
.round-clip {
    margin-top: 36px;
}
.translate {
    margin-top: auto;
}
.lang {
    font-family: "Open Sans", sans-serif;
    font-weight: 600;
    font-size: 17px;
    line-height: 22px;
    margin: 22px 5px 8px 0;
}
.panel {
    flex: 1;
    display: flex;
    flex-direction: column;
}
.panel-top {
    height: 40px;
    background-color: #1565c0;
    display: flex;
    align-items: center;
    justify-content: flex-end;
    padding-right: 9px;
}
.top-min {
    margin-left: 21px;
}
.top-close {
    margin-left: 22px;
}
.panel-body {
    flex: 1;
    display: flex;
    padding: 25px 0 0 25px;
}
.texts {
    width: 800px;
}
.box {
    height: 230px;
    background-color: #efefef;
    color: #111;
    padding: 11px;
    line-height: 25px;
    white-space: nowrap;
}
.box-en {
    font-family: "Liberation Sans", Arial, sans-serif;
    font-size: 19.3px;
}
.box-ta {
    font-family: "Noto Sans Tamil", "Noto Sans", "Liberation Sans", sans-serif;
    font-size: 15.4px;
}
.trans-head {
    height: 45px;
    display: flex;
    justify-content: space-between;
    align-items: flex-start;
    padding-right: 18px;
}
.trans-label {
    font-family: "DejaVu Sans Mono", monospace;
    font-size: 16.6px;
    margin-top: 21px;
    line-height: 22px;
}
.save {
    margin-top: 15px;
}
.moods {
    margin-left: 20px;
    padding-top: 21px;
}
.mood {
    height: 81px;
    display: flex;
    gap: 20px;
    align-items: flex-start;
}
.ring {
    display: grid;
    place-items: center;
    margin-top: 3px;
}
.mood:nth-child(even) .ring {
    margin-left: 1px;
}
.ring svg, .ring span {
    grid-area: 1 / 1;
}
.ring span {
    font-family: Roboto, sans-serif;
    font-weight: 300;
    font-size: 17px;
    color: #26845a;
    margin: 0 3px 2px 0;
}
.ring-on span {
    margin: 0 0 2px 5px;
}
```
